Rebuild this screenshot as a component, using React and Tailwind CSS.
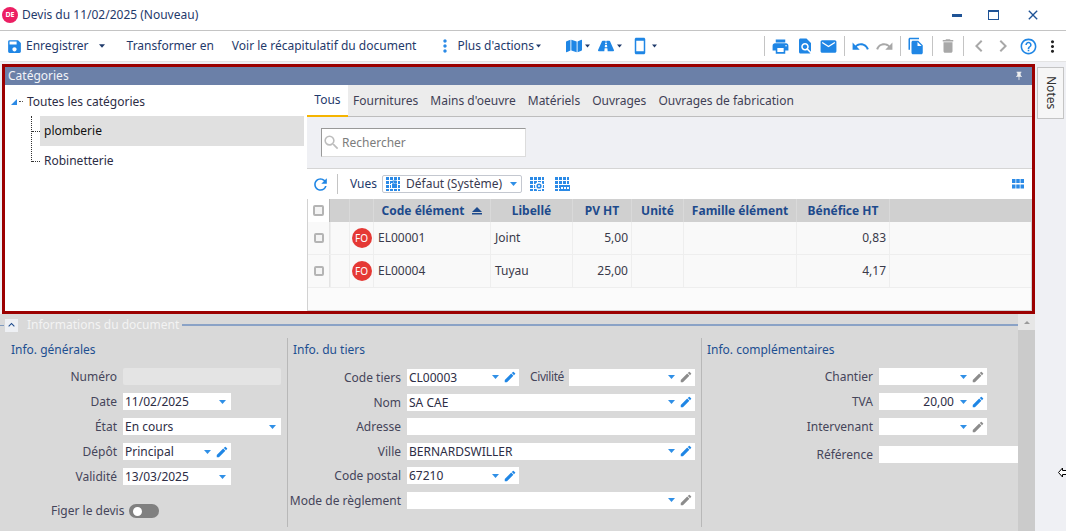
import React from "react";
import { MdSave, MdPrint, MdFindInPage, MdEmail, MdUndo, MdRedo, MdFileCopy, MdDelete, MdChevronLeft, MdChevronRight, MdHelpOutline, MdMoreVert, MdEdit, MdRefresh, MdSmartphone, MdSearch, MdPushPin, MdKeyboardArrowUp, MdClose, MdCropSquare } from "react-icons/md";
import { FaMap, FaRoad } from "react-icons/fa";

const Caret = ({ className = "", w = 7, color = "#2f8fe6" }) => (
  <svg width={w} height={4} viewBox="0 0 7 4" className={`shrink-0 ${className}`}><polygon points="0,0 7,0 3.5,4" fill={color} /></svg>
);

const GridIcon = ({ badge, className = "" }) => (
  <svg width="15" height="16" viewBox="0 0 15 16" className={`shrink-0 ${className}`}>
    <rect x="0" y="1" width="14" height="14" fill="#2b8ae6" />
    {[4, 8, 12].map((v) => <rect key={"h" + v} x="0" y={v} width="14" height="1" fill="#fff" />)}
    {[3, 7, 11].map((v) => <rect key={"v" + v} x={v} y="1" width="1" height="14" fill="#fff" />)}
    {badge === "lock" && <g><rect x="5" y="7" width="7" height="6" fill="#fff" /><rect x="6" y="8" width="5" height="4" fill="#2b8ae6" /><rect x="7" y="5" width="3" height="3" fill="none" stroke="#2b8ae6" /></g>}
    {badge === "gear" && <g><circle cx="9" cy="10" r="4" fill="#fff" /><circle cx="9" cy="10" r="2.6" fill="#2b8ae6" /><circle cx="9" cy="10" r="1" fill="#fff" /></g>}
    {badge === "dots" && <g><rect x="5" y="9" width="10" height="6" fill="#2b8ae6" /><rect x="6" y="11" width="2" height="2" fill="#fff" /><rect x="9" y="11" width="2" height="2" fill="#fff" /><rect x="12" y="11" width="2" height="2" fill="#fff" /></g>}
  </svg>
);

const Sep = ({ className = "" }) => <div className={`w-px h-[20px] bg-[#c4c4c4] shrink-0 ${className}`} />;

const Combo = ({ w, text = "", caret = true, pen, right = false }) => (
  <div className={`${w} h-[17px] bg-white flex items-center shrink-0 pl-[2px] pr-[2px] text-[#2d2d45]`}>
    <span className={`flex-1 leading-[17px] whitespace-nowrap ${right ? "text-right pr-[6px]" : ""}`}>{text}</span>
    {caret && <Caret className={pen ? "mr-[4px]" : "mr-[3px]"} />}
    {pen === "blue" && <MdEdit size={14} color="#1f86e5" className="shrink-0" />}
    {pen === "grey" && <MdEdit size={14} color="#8c8c8c" className="shrink-0" />}
  </div>
);

const Label = ({ w, children }) => (
  <span className={`${w} shrink-0 text-right whitespace-nowrap text-[#45455a] leading-[15px]`}>{children}</span>
);

const Row = ({ w, gap = "gap-[6px]", label, children }) => (
  <div className={`flex items-center ${gap}`}>
    <Label w={w}>{label}</Label>
    {children}
  </div>
);

const Cell = ({ className = "", children }) => (
  <div className={`flex items-center border-r border-[#eeeeee] whitespace-nowrap ${className}`}>{children}</div>
);

const COLS = "grid grid-cols-[22px_20px_24px_117px_82px_59px_52px_113px_93px_1fr]";

const GridRow = ({ code, lib, pv, ben, h }) => (
  <div className={`${COLS} ${h} bg-[#f9f9f9] border-b border-[#eeeeee] text-[#3a3a4a]`}>
    <div className="flex items-center justify-center border-r border-[#e4e4e4]"><span className="w-[10px] h-[10px] border-2 border-[#b4b4b4] rounded-[2px] bg-[#f4f4f4]" /></div>
    <Cell className="border-l border-[#b8b8b8]" />
    <Cell className="justify-center">
      <span className="w-[20px] h-[20px] rounded-full bg-[#e53935] text-white text-[10px] flex items-center justify-center">FO</span>
    </Cell>
    <Cell className="pl-[4px]">{code}</Cell>
    <Cell className="pl-[4px]">{lib}</Cell>
    <Cell className="justify-end pr-[3px]">{pv}</Cell>
    <Cell />
    <Cell />
    <Cell className="justify-end pr-[3px]">{ben}</Cell>
    <div />
  </div>
);

const HeadCell = ({ children, className = "" }) => (
  <div className={`flex items-center justify-center border-r border-[#d9d9d9] font-bold text-[#1d4a8c] whitespace-nowrap ${className}`}>{children}</div>
);

export default function App() {
  return (
    <div className="relative w-[1066px] h-[531px] overflow-hidden bg-[#eff0f4] flex flex-col text-[12px] font-['Noto_Sans','Open_Sans',sans-serif]">
      {/* Title bar */}
      <div className="h-[31px] shrink-0 bg-white border-b border-[#c4c4c4] flex items-center">
        <span className="ml-[2px] w-[16px] h-[16px] rounded-full bg-[#ec1f63] text-white text-[7px] font-bold flex items-center justify-center">DE</span>
        <span className="ml-[4px] text-[#1f3a6b] whitespace-nowrap">Devis du 11/02/2025 (Nouveau)</span>
        <div className="ml-auto flex items-center">
          <span className="w-[10px] h-[3px] bg-[#1f5396] mr-[26px]" />
          <span className="w-[11px] h-[10px] border border-t-2 border-[#1f5396] mr-[26px]" />
          <MdClose size={16} color="#1f5396" className="mr-[25px]" />
        </div>
      </div>

      {/* Toolbar */}
      <div className="h-[31px] shrink-0 bg-white border-b border-[#e4e4e4] flex items-center text-[#1f3a6b] whitespace-nowrap">
        <MdSave size={17} color="#1f86e5" className="ml-[6px] shrink-0" />
        <span className="ml-[3px]">Enregistrer</span>
        <Caret w={6} color="#1f3a6b" className="ml-[10px]" />
        <span className="ml-[22px]">Transformer en</span>
        <span className="ml-[18px]">Voir le récapitulatif du document</span>
        <MdMoreVert size={20} color="#2b8ae6" className="ml-[19px] shrink-0" />
        <span className="ml-[2px]">Plus d'actions</span>
        <Caret w={5} color="#1f3a6b" className="ml-[2px]" />
        <FaMap size={16} color="#1f86e5" className="ml-[25px] shrink-0" />
        <Caret w={5} color="#1f3a6b" className="ml-[3px]" />
        <FaRoad size={16} color="#1f86e5" className="ml-[8px] shrink-0" />
        <Caret w={5} color="#1f3a6b" className="ml-[3px]" />
        <MdSmartphone size={18} color="#1f86e5" className="ml-[9px] shrink-0" />
        <Caret w={5} color="#1f3a6b" className="ml-[3px]" />
        <div className="ml-auto flex items-center">
          <Sep />
          <MdPrint size={19} color="#1f86e5" className="ml-[6px]" />
          <MdFindInPage size={18} color="#1f86e5" className="ml-[6px]" />
          <MdEmail size={19} color="#1f86e5" className="ml-[5px]" />
          <Sep className="ml-[6px]" />
          <MdUndo size={19} color="#1f86e5" className="ml-[6px]" />
          <MdRedo size={19} color="#a8a8a8" className="ml-[5px]" />
          <Sep className="ml-[6px]" />
          <MdFileCopy size={18} color="#1f86e5" className="ml-[6px]" />
          <Sep className="ml-[7px]" />
          <MdDelete size={18} color="#a8a8a8" className="ml-[6px]" />
          <Sep className="ml-[6px]" />
          <MdChevronLeft size={24} color="#a8a8a8" className="ml-[3px]" />
          <MdChevronRight size={24} color="#a8a8a8" className="ml-[0px]" />
          <MdHelpOutline size={19} color="#1f86e5" className="ml-[4px]" />
          <MdMoreVert size={19} color="#222222" className="ml-[5px] mr-[4px]" />
        </div>
      </div>

      {/* Top work zone */}
      <div className="flex shrink-0 mt-[2px]">
        <div className="ml-[2px] w-[1033px] h-[250px] border-[3px] border-[#9b0000] flex flex-col">
          <div className="h-[18px] shrink-0 bg-[#6b80a8] text-[#f2f4f8] flex items-center pl-[3px] pr-[8px] justify-between">
            <span>Catégories</span>
            <MdPushPin size={10} color="#eeeeee" />
          </div>
          <div className="flex-1 flex min-h-0 bg-white">
            {/* Tree */}
            <div className="w-[299px] shrink-0 text-[#2d2d45] pt-[9px]">
              <div className="flex items-center h-[15px] pl-[6px]">
                <svg width="6" height="6" viewBox="0 0 6 6" className="shrink-0"><polygon points="6,0 6,6 0,6" fill="#2b8ae6" /></svg>
                <span className="ml-[2px] w-[4px] border-t border-dotted border-[#555]" />
                <span className="ml-[4px] whitespace-nowrap">Toutes les catégories</span>
              </div>
              <div className="flex mt-[7px]">
                <div className="ml-[26px] w-[1px] h-[46px] mt-0 border-l border-dotted border-[#333]" />
                <div className="flex-1">
                  <div className="flex items-center h-[30px]">
                    <span className="w-[8px] border-t border-dotted border-[#333] shrink-0" />
                    <span className="flex-1 h-full flex items-center bg-[#e0e0e0] text-[#111] pl-[4px]">plomberie</span>
                  </div>
                  <div className="flex items-center h-[30px]">
                    <span className="w-[8px] border-t border-dotted border-[#333] shrink-0" />
                    <span className="pl-[4px]">Robinetterie</span>
                  </div>
                </div>
              </div>
            </div>
            {/* Right */}
            <div className="flex-1 min-w-0 flex flex-col">
              <div className="h-[32px] shrink-0 ml-[3px] bg-[#ececec] border-b border-[#bdbdbd] flex text-[#3f3f55] whitespace-nowrap">
                <div className="w-[41px] bg-white border-b-2 border-[#f5b400] -mb-px flex items-center justify-center text-[#1f3a6b]">Tous</div>
                <span className="ml-[5px] self-center">Fournitures</span>
                <span className="ml-[12px] self-center">Mains d'oeuvre</span>
                <span className="ml-[12px] self-center">Matériels</span>
                <span className="ml-[12px] self-center">Ouvrages</span>
                <span className="ml-[12px] self-center">Ouvrages de fabrication</span>
              </div>
              <div className="h-[52px] shrink-0 ml-[3px] bg-[#eff0f4] border-b border-[#d5d5d5] flex items-center pl-[14px]">
                <div className="w-[205px] h-[29px] bg-white border border-[#dcdcdc] border-t-[#999999] border-l-[#999999] flex items-center text-[#7c7c7c]">
                  <MdSearch size={19} color="#bdbdbd" className="shrink-0" />
                  <span className="ml-[1px]">Rechercher</span>
                </div>
              </div>
              <div className="h-[30px] shrink-0 ml-[3px] bg-white flex items-center text-[#1f3a6b]">
                <MdRefresh size={19} color="#1f86e5" className="ml-[4px] shrink-0" />
                <Sep className="ml-[7px]" />
                <span className="ml-[12px]">Vues</span>
                <div className="ml-[5px] w-[140px] h-[18px] border border-[#c4c8d0] rounded-[2px] flex items-center pl-[3px] pr-[2px] text-[#3a3a50]">
                  <GridIcon badge="lock" />
                  <span className="ml-[5px] flex-1 whitespace-nowrap">Défaut (Système)</span>
                  <Caret className="mr-[2px]" />
                </div>
                <GridIcon badge="gear" className="ml-[8px]" />
                <GridIcon badge="dots" className="ml-[10px]" />
                <svg width="12" height="10" viewBox="0 0 12 10" className="ml-auto mr-[8px] shrink-0">
                  <g fill="#2b8ae6"><rect x="0" y="0" width="3.5" height="4" /><rect x="4.25" y="0" width="3.5" height="4" /><rect x="8.5" y="0" width="3.5" height="4" /><rect x="0" y="5.5" width="3.5" height="4" /><rect x="4.25" y="5.5" width="3.5" height="4" /><rect x="8.5" y="5.5" width="3.5" height="4" /></g>
                </svg>
              </div>
              <div className="flex-1 min-h-0 ml-[3px] bg-[#fbfbfb] border border-t-0 border-[#d2d2d2] flex flex-col">
                <div className={`${COLS} h-[23px] shrink-0 bg-[#d0d0d0]`}>
                  <div className="flex items-center justify-center bg-white border-r border-[#b8b8b8]"><span className="w-[11px] h-[11px] border-2 border-[#b4b4b4] rounded-[2px] bg-[#f4f4f4]" /></div>
                  <HeadCell />
                  <HeadCell />
                  <HeadCell className="gap-[8px]">Code élément
                    <svg width="10" height="8" viewBox="0 0 10 8" className="shrink-0"><polygon points="5,0 10,5 0,5" fill="#1d4a8c" /><rect x="0" y="6" width="10" height="1.5" fill="#1d4a8c" /></svg>
                  </HeadCell>
                  <HeadCell>Libellé</HeadCell>
                  <HeadCell>PV HT</HeadCell>
                  <HeadCell>Unité</HeadCell>
                  <HeadCell>Famille élément</HeadCell>
                  <HeadCell>Bénéfice HT</HeadCell>
                  <div />
                </div>
                <GridRow code="EL00001" lib="Joint" pv="5,00" ben="0,83" h="h-[33px]" />
                <GridRow code="EL00004" lib="Tuyau" pv="25,00" ben="4,17" h="h-[33px]" />
              </div>
            </div>
          </div>
        </div>
        {/* Notes */}
        <div className="ml-[2px] mt-[3px] w-[27px] h-[52px] bg-[#f6f6f6] border border-[#c4c4c4] flex items-center justify-center">
          <span className="[writing-mode:vertical-rl] text-[#333333] text-[12px]">Notes</span>
        </div>
      </div>

      {/* Bottom panel */}
      <div className="flex flex-1 min-h-0">
        <div className="w-[1018px] shrink-0 bg-[#d9d9d9] flex flex-col">
          <div className="h-[22px] shrink-0 flex items-center">
            <span className="w-[4px] h-px bg-[#7f9ac0] mt-[1px]" />
            <span className="ml-[1px] w-[13px] h-[13px] bg-[#eef0f4] flex items-center justify-center"><MdKeyboardArrowUp size={14} color="#1d4a8c" /></span>
            <span className="ml-[9px] text-[#f3f3f3] whitespace-nowrap">Informations du document</span>
            <span className="ml-[3px] flex-1 h-[2px] bg-[#8aa2c6]" />
          </div>
          <div className="flex-1 min-h-0 flex pt-[2px] pb-[4px]">
            <div className="w-[288px] shrink-0 border-r border-[#b8b8b8]">
              <div className="pl-[11px] h-[24px] flex items-center text-[#1d4f91]">Info. générales</div>
              <div className="mt-[6px] flex flex-col gap-[8px]">
                <Row w="w-[117px]" label="Numéro"><div className="w-[158px] h-[17px] rounded-[2px] bg-[#e4e4e4] shrink-0" /></Row>
                <Row w="w-[117px]" label="Date"><Combo w="w-[108px]" text="11/02/2025" /></Row>
                <Row w="w-[117px]" label="État"><Combo w="w-[158px]" text="En cours" /></Row>
                <Row w="w-[117px]" label="Dépôt"><Combo w="w-[108px]" text="Principal" pen="blue" /></Row>
                <Row w="w-[117px]" label="Validité"><Combo w="w-[108px]" text="13/03/2025" /></Row>
              </div>
              <div className="mt-[17px] flex items-center">
                <span className="ml-[51px] text-[#45455a] whitespace-nowrap">Figer le devis</span>
                <span className="ml-[5px] w-[30px] h-[14px] rounded-full bg-[#808080] flex items-center pl-[4px]"><span className="w-[9px] h-[9px] rounded-full bg-white" /></span>
              </div>
            </div>
            <div className="w-[414px] shrink-0 border-r border-[#b8b8b8]">
              <div className="pl-[5px] h-[24px] flex items-center text-[#1d4f91]">Info. du tiers</div>
              <div className="mt-[6px] flex flex-col gap-[7.6px]">
                <div className="flex items-center">
                  <Row w="w-[113px]" label="Code tiers"><Combo w="w-[112px]" text="CL00003" pen="blue" /></Row>
                  <span className="ml-[11px] w-[33px] text-[#45455a] tracking-[-0.4px] whitespace-nowrap">Civilité</span>
                  <span className="ml-[6px]"><Combo w="w-[126px]" pen="grey" /></span>
                </div>
                <Row w="w-[113px]" label="Nom"><Combo w="w-[288px]" text="SA CAE" pen="blue" /></Row>
                <Row w="w-[113px]" label="Adresse"><Combo w="w-[288px]" caret={false} /></Row>
                <Row w="w-[113px]" label="Ville"><Combo w="w-[288px]" text="BERNARDSWILLER" pen="blue" /></Row>
                <Row w="w-[113px]" label="Code postal"><Combo w="w-[112px]" text="67210" pen="blue" /></Row>
                <Row w="w-[113px]" label="Mode de règlement"><Combo w="w-[288px]" pen="grey" /></Row>
              </div>
            </div>
            <div className="flex-1 min-w-0">
              <div className="pl-[5px] h-[24px] flex items-center text-[#1d4f91]">Info. complémentaires</div>
              <div className="mt-[6px] flex flex-col gap-[8px]">
                <Row w="w-[171px]" label="Chantier"><Combo w="w-[108px]" pen="grey" /></Row>
                <Row w="w-[171px]" label="TVA"><Combo w="w-[108px]" text="20,00" right pen="blue" /></Row>
                <Row w="w-[171px]" label="Intervenant"><Combo w="w-[108px]" pen="grey" /></Row>
                <div className="mt-[3px]"><Row w="w-[171px]" label="Référence"><div className="w-[139px] h-[17px] bg-white shrink-0" /></Row></div>
              </div>
            </div>
          </div>
        </div>
        <div className="w-[17px] shrink-0 bg-[#cbcbcb] flex flex-col">
          <div className="h-[16px] bg-[#e6e6e6] flex items-center justify-center">
            <svg width="6" height="3" viewBox="0 0 6 3"><polygon points="3,0 6,3 0,3" fill="#9a9a9a" /></svg>
          </div>
        </div>
      </div>

      {/* mouse cursor */}
      <svg width="10" height="11" viewBox="0 0 10 11" className="absolute left-[1058px] top-[467px]">
        <path d="M0.5 5.5 L4.5 1 L4.5 3.5 L9 3.5 L9 7.5 L4.5 7.5 L4.5 10 Z" fill="#fff" stroke="#000" strokeWidth="1" />
      </svg>
    </div>
  );
}
